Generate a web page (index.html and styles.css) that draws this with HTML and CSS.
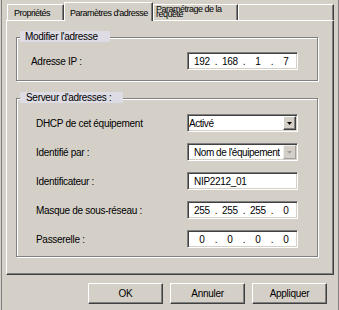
FILE: index.html
```html
<!DOCTYPE html>
<html lang="fr">
<head>
    <meta charset="UTF-8">
    <meta name="viewport" content="width=device-width, initial-scale=1.0">
    <title>Paramètres d'adresse</title>
    <link rel="stylesheet" href="styles.css">
</head>
<body>

    <div class="window">
        <div class="tabs">
            <div class="tab tab-first">Propriétés</div>
            <div class="tab tab-active">Paramètres d'adresse</div>
            <div class="tab tab-wrap">Paramétrage de la requête</div>
            <div class="tab tab-empty"></div>
        </div>

        <div class="panel">
            <div class="group group-first">
                <div class="group-title">Modifier l'adresse</div>
                <div class="rows rows-first">
                    <div class="row">
                        <span class="label">Adresse IP :</span>
                        <div class="field ip">
                            <span class="seg">192</span><span class="dot">.</span>
                            <span class="seg">168</span><span class="dot">.</span>
                            <span class="seg">1</span><span class="dot">.</span>
                            <span class="seg">7</span>
                        </div>
                    </div>
                </div>
            </div>

            <div class="group group-second">
                <div class="group-title">Serveur d'adresses :</div>
                <div class="rows rows-second">
                    <div class="row">
                        <span class="label">DHCP de cet équipement</span>
                        <div class="field select">
                            <span class="value value-tight">Activé</span>
                            <span class="drop">
                                <svg width="5" height="3" viewBox="0 0 5 3"><polygon points="0,0 5,0 2.5,3" fill="#000"/></svg>
                            </span>
                        </div>
                    </div>
                    <div class="row">
                        <span class="label">Identifié par :</span>
                        <div class="field select">
                            <span class="value">Nom de l'équipement</span>
                            <span class="drop drop-off">
                                <svg width="5" height="3" viewBox="0 0 5 3"><polygon points="0,0 5,0 2.5,3" fill="#a0a0a0"/></svg>
                            </span>
                        </div>
                    </div>
                    <div class="row">
                        <span class="label">Identificateur :</span>
                        <div class="field">
                            <span class="value value-text">NIP2212_01</span>
                        </div>
                    </div>
                    <div class="row">
                        <span class="label">Masque de sous-réseau :</span>
                        <div class="field ip">
                            <span class="seg">255</span><span class="dot">.</span>
                            <span class="seg">255</span><span class="dot">.</span>
                            <span class="seg">255</span><span class="dot">.</span>
                            <span class="seg">0</span>
                        </div>
                    </div>
                    <div class="row">
                        <span class="label">Passerelle :</span>
                        <div class="field ip">
                            <span class="seg">0</span><span class="dot">.</span>
                            <span class="seg">0</span><span class="dot">.</span>
                            <span class="seg">0</span><span class="dot">.</span>
                            <span class="seg">0</span>
                        </div>
                    </div>
                </div>
            </div>
        </div>

        <div class="buttons">
            <button class="btn">OK</button>
            <button class="btn">Annuler</button>
            <button class="btn">Appliquer</button>
        </div>
    </div>

</body>
</html>
```

FILE: styles.css
```css
body {
    margin: 0;
    padding: 0;
    background-color: #d4d0c8;
    color: #000000;
    font-family: "Liberation Sans", Arial, sans-serif;
    font-size: 10px;
    letter-spacing: -0.3px;
}
.window {
    margin-left: 1px;
    height: 310px;
    box-sizing: border-box;
    border-left: 1px solid #808080;
    border-right: 1px solid #808080;
}

/* tabs */
.tabs {
    display: flex;
    align-items: flex-end;
    padding-top: 2px;
    margin: 0 4px 0 5px;
}
.tab {
    box-sizing: border-box;
    height: 16px;
    padding: 2px 0 0 6px;
    font-size: 9px;
    line-height: 13px;
    letter-spacing: -0.5px;
    white-space: nowrap;
    overflow: hidden;
    background-color: #d4d0c8;
    border-top: 1px solid #ffffff;
    border-left: 1px solid #ffffff;
    border-right: 1px solid #404040;
    box-shadow: inset -1px 0 0 #808080;
}
.tab-first {
    width: 57px;
}
.tab-active {
    position: relative;
    z-index: 1;
    width: 89px;
    height: 19px;
    margin-bottom: -1px;
    padding: 4px 0 0 5px;
}
.tab-wrap {
    width: 85px;
    padding: 2px 0 0 2px;
    line-height: 5px;
    white-space: normal;
}
.tab-empty {
    flex: 1;
}

/* panel */
.panel {
    margin: 0 4px 0 4px;
    padding: 0 0 17px 0;
    background-color: #d4d0c8;
    border-top: 1px solid #ffffff;
    border-left: 1px solid #ffffff;
    border-right: 1px solid #404040;
    border-bottom: 1px solid #404040;
    box-shadow: inset -1px -1px 0 #808080;
}
.group {
    margin: 0 15px 0 9px;
    border: 1px solid #808080;
    box-shadow: inset 1px 1px 0 #ffffff, 1px 1px 0 #ffffff;
}
.group-first {
    margin-top: 16px;
    padding-bottom: 10px;
}
.group-second {
    margin-top: 17px;
    padding-bottom: 8px;
}
.group-title {
    width: fit-content;
    margin: -7px 0 0 3px;
    padding: 0 12px 0 5px;
    height: 11px;
    line-height: 11px;
    background-color: #dddbe3;
}
.group-second .group-title {
    padding-left: 6px;
}
.rows {
    display: flex;
    flex-direction: column;
    gap: 11px;
}
.rows-first {
    margin-top: 10px;
}
.rows-second {
    margin-top: 11px;
}
.row {
    display: flex;
    align-items: center;
    height: 18px;
}
.label {
    width: 170px;
    box-sizing: border-box;
    white-space: nowrap;
}
.rows-first .label {
    padding-left: 14px;
}
.rows-second .label {
    padding-left: 19px;
}

/* fields */
.field {
    display: flex;
    align-items: center;
    box-sizing: border-box;
    width: 111px;
    height: 18px;
    padding: 1px;
    background-color: #ffffff;
    border: 1px solid;
    border-color: #808080 #ffffff #ffffff #808080;
    box-shadow: inset 1px 1px 0 #404040, inset -1px -1px 0 #d4d0c8;
    white-space: nowrap;
}
.ip {
    padding-left: 4px;
}
.seg {
    width: 20px;
    text-align: center;
}
.dot {
    width: 8px;
    text-align: center;
}
.select {
    justify-content: space-between;
}
.value {
    padding-left: 5px;
    overflow: hidden;
    letter-spacing: -0.45px;
}
.value-tight {
    padding-left: 0;
}
.value-text {
    padding-left: 5px;
    letter-spacing: -0.3px;
}
.drop {
    display: flex;
    align-items: center;
    justify-content: center;
    flex: none;
    box-sizing: border-box;
    width: 13px;
    height: 14px;
    background-color: #d4d0c8;
    border: 1px solid;
    border-color: #ffffff #404040 #404040 #ffffff;
    box-shadow: inset -1px -1px 0 #808080;
}
.drop-off {
    border-color: #f0f0f0 #a0a0a0 #a0a0a0 #f0f0f0;
    box-shadow: none;
}

/* buttons */
.buttons {
    display: flex;
    justify-content: flex-end;
    gap: 7px;
    margin-top: 8px;
    padding-right: 11px;
}
.btn {
    width: 75px;
    height: 21px;
    padding: 0;
    font-family: "Liberation Sans", Arial, sans-serif;
    font-size: 10px;
    letter-spacing: -0.3px;
    color: #000000;
    background-color: #d4d0c8;
    border: 1px solid;
    border-color: #ffffff #404040 #404040 #ffffff;
    box-shadow: inset -1px -1px 0 #808080;
}
```
